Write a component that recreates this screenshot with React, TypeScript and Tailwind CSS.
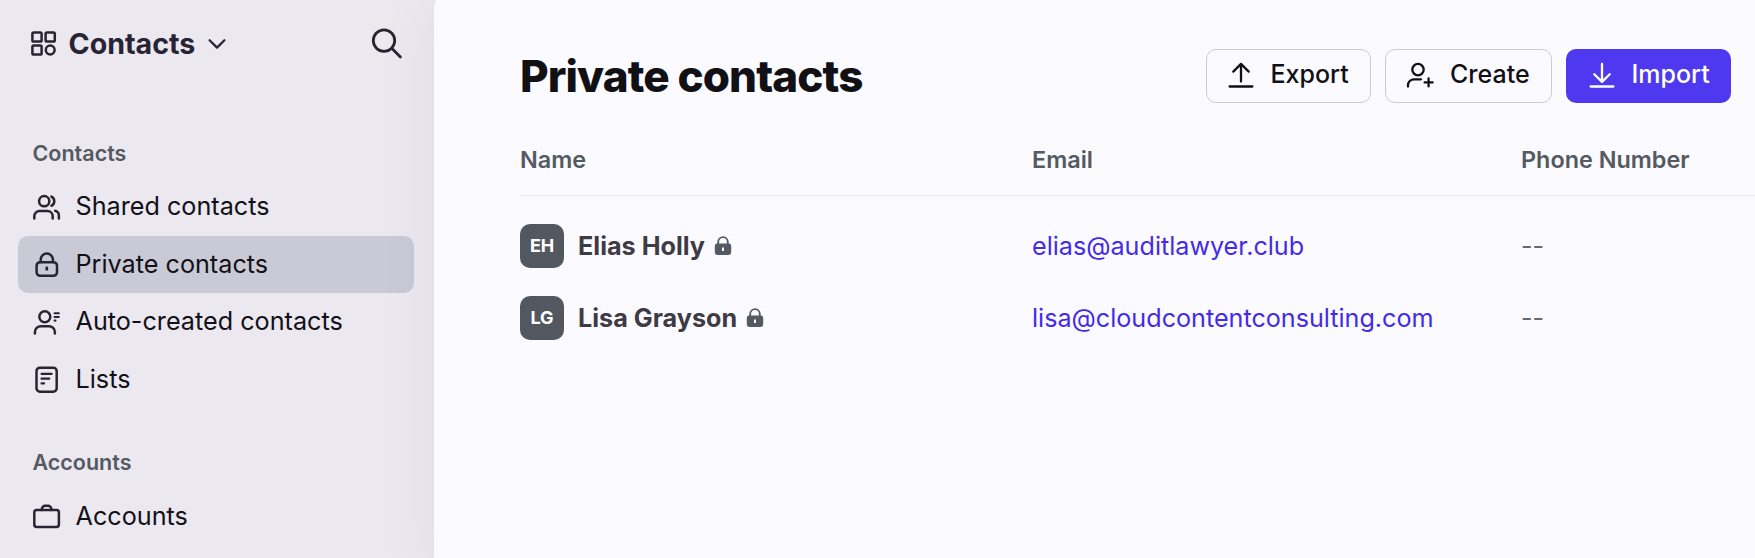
import React from "react";

type IconProps = { className?: string };

const stroke = {
  fill: "none",
  stroke: "currentColor",
  strokeWidth: 2.5,
  strokeLinecap: "round" as const,
  strokeLinejoin: "round" as const,
};

function AppsIcon({ className }: IconProps) {
  return (
    <svg width="26" height="26" viewBox="0 0 26 26" className={className} {...stroke} strokeWidth={2.5}>
      <rect x="1.4" y="1.4" width="9.2" height="9.2" rx="1.4" />
      <rect x="14.6" y="1.4" width="9.2" height="9.2" rx="1.4" />
      <rect x="1.4" y="14.4" width="9.2" height="9.2" rx="1.4" />
      <circle cx="19.2" cy="19" r="4.4" />
    </svg>
  );
}

function SharedIcon() {
  return (
    <svg width="28" height="28" viewBox="0 0 28 28" {...stroke}>
      <circle cx="11.2" cy="7.2" r="5.1" />
      <path d="M1.3 24.4v-2.2a5.2 5.2 0 0 1 5.2-5.2h8a5.2 5.2 0 0 1 5.2 5.2v2.2" />
      <path d="M18.4 2.6a5.1 5.1 0 0 1 0 9.2" />
      <path d="M22.2 16.8a5.2 5.2 0 0 1 3.7 5v2.6" />
    </svg>
  );
}

function LockIcon() {
  return (
    <svg width="28" height="28" viewBox="0 0 28 28" {...stroke}>
      <rect x="3.6" y="11.2" width="20.4" height="13.6" rx="3.6" />
      <path d="M7.7 11V8.6a6.1 6.1 0 0 1 12.2 0V11" />
      <path d="M13.8 15.6v3.9" strokeWidth={2.6} strokeLinecap="butt" />
    </svg>
  );
}

function AutoIcon() {
  return (
    <svg width="28" height="28" viewBox="0 0 28 28" {...stroke}>
      <circle cx="11.8" cy="7.7" r="5.5" />
      <path d="M1.9 24.4v-1.2a6 6 0 0 1 6-6h8a6 6 0 0 1 6 6v1.2" />
      <path d="M21.6 4.2h4.2M21.6 8h4.2M21.6 11.6h.9" strokeWidth={2.1} />
    </svg>
  );
}

function ListIcon() {
  return (
    <svg width="28" height="28" viewBox="0 0 28 28" {...stroke}>
      <rect x="3.5" y="1.7" width="20.2" height="24" rx="3.4" />
      <path d="M8.6 7.8h10M8.6 12.7h7.6M8.6 17.4h2.4" strokeWidth={2.3} />
    </svg>
  );
}

function BriefcaseIcon() {
  return (
    <svg width="28" height="28" viewBox="0 0 28 28" {...stroke}>
      <rect x="1.3" y="7.1" width="24.6" height="16.8" rx="2.4" />
      <path d="M8.8 7V6.2a3.4 3.4 0 0 1 3.4-3.4h2.8a3.4 3.4 0 0 1 3.4 3.4V7" />
    </svg>
  );
}

function SmallLock() {
  return (
    <svg width="18" height="20" viewBox="0 0 18 20" className="ml-[9px]" fill="none">
      <path d="M4.2 9V6a4.8 4.8 0 0 1 9.6 0v3" stroke="#545962" strokeWidth="1.8" />
      <path
        fillRule="evenodd"
        fill="#545962"
        d="M3.2 7.6h11.6a2.4 2.4 0 0 1 2.4 2.4v6a3 3 0 0 1-3 3H3.8a3 3 0 0 1-3-3v-6a2.4 2.4 0 0 1 2.4-2.4ZM8 11.6v3.4h2v-3.4Z"
      />
    </svg>
  );
}

function ExportIcon() {
  return (
    <svg width="26" height="28" viewBox="0 0 26 28" {...stroke} strokeWidth={2.3}>
      <path d="M13 19.5V2M5.3 9.6 13 1.9l7.7 7.7M1.6 24.5h22.8" />
    </svg>
  );
}

function ImportIcon() {
  return (
    <svg width="26" height="28" viewBox="0 0 26 28" {...stroke} strokeWidth={2.3}>
      <path d="M13 2v17.6M5.3 12.2l7.7 7.7 7.7-7.7M1.6 24.5h22.8" />
    </svg>
  );
}

function CreateIcon() {
  return (
    <svg width="28" height="28" viewBox="0 0 28 28" {...stroke} strokeWidth={2.3}>
      <circle cx="12" cy="7.6" r="5.7" />
      <path d="M2 24.6v-1.3a6 6 0 0 1 6-6h7" />
      <path d="M22.6 16.4v8M18.6 20.4h8" />
    </svg>
  );
}

function NavItem({ icon, label, active }: { icon: React.ReactNode; label: string; active?: boolean }) {
  return (
    <a
      className={
        active
          ? "flex h-[57.6px] items-center gap-[15px] rounded-[10px] bg-[#cacad7] pl-[14.5px]"
          : "flex h-[57.6px] items-center gap-[15px] pl-[14.5px]"
      }
    >
      <span className="pt-[1.5px] text-[#292433]">{icon}</span>
      <span className="text-[25.2px] text-[#121118]">{label}</span>
    </a>
  );
}

function Contact({ initials, name, email }: { initials: string; name: string; email: string }) {
  return (
    <div className="grid h-[72px] grid-cols-[512px_489px_1fr] items-center">
      <div className="flex items-center">
        <span className="flex size-11 items-center justify-center rounded-[10px] bg-[#535860] text-[18px] font-bold tracking-[-0.2px] text-white">
          {initials}
        </span>
        <span className="ml-[14px] pt-[2px] text-[25.2px] font-bold text-[#3e3b45]">{name}</span>
        <SmallLock />
      </div>
      <a className="pt-[2px] text-[25.15px] text-[#432be8]">{email}</a>
      <span className="pt-px text-[25px] text-[#656873]">--</span>
    </div>
  );
}

export default function App() {
  return (
    <div className="flex h-[558px] w-full overflow-hidden bg-[#ebe8ef] font-['Inter',sans-serif] leading-none">
      <aside className="w-[434px] shrink-0 pr-5 pl-[18px]">
        <header className="flex h-[87px] items-center pl-[13px] text-[#292433]">
          <AppsIcon />
          <h2 className="ml-[11.5px] pt-[2px] text-[28.6px] font-bold">Contacts</h2>
          <svg width="20" height="20" viewBox="0 0 20 20" className="ml-3" {...stroke} strokeWidth={2.3}>
            <path d="m2.6 6.2 7.4 7.4 7.4-7.4" />
          </svg>
          <svg width="32" height="32" viewBox="0 0 32 32" className="mr-[11px] ml-auto" {...stroke} strokeWidth={2.8}>
            <circle cx="13" cy="12.6" r="10.7" />
            <path d="m21 20.6 8.4 8.4" />
          </svg>
        </header>
        <h3 className="mt-[55px] pl-[14.5px] text-[21.5px] leading-[22px] font-semibold text-[#545962]">Contacts</h3>
        <nav className="mt-[14px]">
          <NavItem icon={<SharedIcon />} label="Shared contacts" />
          <NavItem icon={<LockIcon />} label="Private contacts" active />
          <NavItem icon={<AutoIcon />} label="Auto-created contacts" />
          <NavItem icon={<ListIcon />} label="Lists" />
        </nav>
        <h3 className="mt-[43px] pl-[14.5px] text-[21.5px] leading-[22px] font-semibold text-[#545962]">Accounts</h3>
        <nav className="mt-[14.5px]">
          <NavItem icon={<BriefcaseIcon />} label="Accounts" />
        </nav>
      </aside>
      <main className="-mt-2 min-w-0 flex-1 rounded-tl-[16px] bg-[#fbfaff] pl-[86px] shadow-[0_12px_60px_rgba(60,60,80,0.08)]">
        <div className="flex items-center pt-[57px] pr-[24px]">
          <h1 className="text-[44px] font-extrabold tracking-[-0.9px] text-[#111015]">Private contacts</h1>
          <div className="ml-auto flex gap-[14px] text-[25px] font-medium text-[#111015]">
            <button className="flex h-[54px] w-[165px] items-center gap-[16.5px] rounded-[10px] border border-[#cccbd4] pl-[21px]">
              <ExportIcon />
              <span className="pb-[3px]">Export</span>
            </button>
            <button className="flex h-[54px] w-[167px] items-center gap-[16px] rounded-[10px] border border-[#cccbd4] pl-[20px]">
              <CreateIcon />
              <span className="pb-[3px]">Create</span>
            </button>
            <button className="flex h-[54px] w-[165px] items-center gap-[16.5px] rounded-[10px] bg-[#4e38f0] pl-[23px] text-white">
              <ImportIcon />
              <span className="pb-[3px]">Import</span>
            </button>
          </div>
        </div>
        <div className="grid h-[93px] grid-cols-[512px_489px_1fr] items-center border-b border-[#e8e7ed] pt-[21px] text-[23.4px] font-semibold text-[#545962]">
          <span>Name</span>
          <span>Email</span>
          <span>Phone Number</span>
        </div>
        <div className="pt-[14px]">
          <Contact initials="EH" name="Elias Holly" email="elias@auditlawyer.club" />
          <Contact initials="LG" name="Lisa Grayson" email="lisa@cloudcontentconsulting.com" />
        </div>
      </main>
    </div>
  );
}
